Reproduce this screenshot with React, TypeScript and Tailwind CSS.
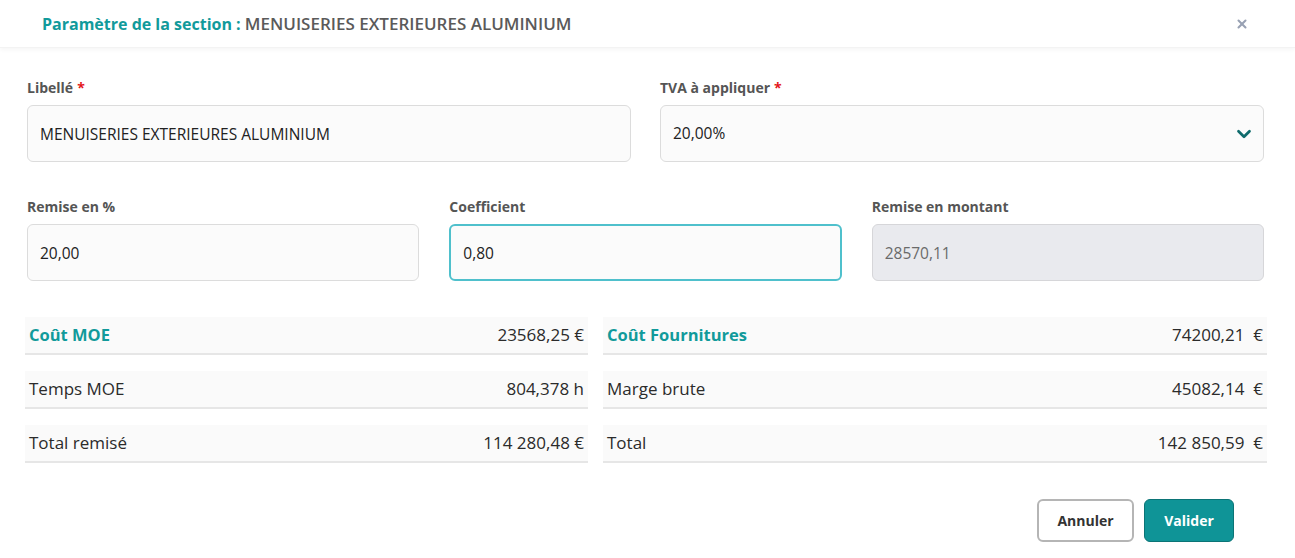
import React, { useState } from 'react';
import { X, ChevronDown } from 'lucide-react';

const font = { fontFamily: '"Open Sans", "Noto Sans", sans-serif' };

const Field: React.FC<{ label: string; required?: boolean; children: React.ReactNode }> = ({ label, required, children }) => (
  <div className="flex flex-col">
    <label className="text-[14px] font-bold text-[#555] mb-[8px] leading-[18px]">
      {label}
      {required && <span className="text-[#e3161b] ml-[4px]">*</span>}
    </label>
    {children}
  </div>
);

const StatRow: React.FC<{ label: string; value: string; accent?: boolean }> = ({ label, value, accent }) => (
  <div className="flex justify-between items-center h-[38px] bg-[#fafafa] border-b-2 border-[#e6e6e6] px-[4px]">
    <span className={accent ? 'text-[16.5px] font-bold text-[#119a9b]' : 'text-[17px] text-[#2b2b2b]'}>{label}</span>
    <span className="text-[17px] text-[#2b2b2b]">{value}</span>
  </div>
);

const base =
  'h-[57px] w-full rounded-[6px] px-[12px] text-[15.5px] outline-none';
const plain = base + ' border border-[#dcdcdc] bg-[#fbfbfb] text-[#222]';

export default function App() {
  const [libelle, setLibelle] = useState('MENUISERIES EXTERIEURES ALUMINIUM');
  const [remise, setRemise] = useState('20,00');
  const [coef, setCoef] = useState('0,80');

  return (
    <div className="w-[1295px] h-[558px] bg-white overflow-hidden" style={font}>
      <div className="h-[48px] flex items-center justify-between pl-[42px] pr-[46px] shadow-[0_2px_4px_rgba(0,0,0,0.04)] border-b border-[#f3f3f3]">
        <h2 className="text-[16px]">
          <span className="font-bold text-[#119a9b]">Paramètre de la section : </span>
          <span className="font-semibold text-[17px] text-[#5a5a5a]">MENUISERIES EXTERIEURES ALUMINIUM</span>
        </h2>
        <X size={14} strokeWidth={3.5} className="text-[#98a1b3]" />
      </div>

      <div className="pl-[27px] pr-[31px] pt-[31px]">
        <div className="grid grid-cols-2 gap-[29px]">
          <Field label="Libellé" required>
            <input className={plain} value={libelle} onChange={(e) => setLibelle(e.target.value)} />
          </Field>
          <Field label="TVA à appliquer" required>
            <div className={plain + ' flex items-center justify-between'}>
              <span>20,00%</span>
              <ChevronDown size={22} strokeWidth={3} className="text-[#0f6b6c] mr-[-4px]" />
            </div>
          </Field>
        </div>

        <div className="grid grid-cols-3 gap-[30px] mt-[36px]">
          <Field label="Remise en %">
            <input className={plain} value={remise} onChange={(e) => setRemise(e.target.value)} />
          </Field>
          <Field label="Coefficient">
            <input
              className={base + ' border-2 border-[#4fc0cc] bg-[#fbfbfb] text-[#222] px-[11px]'}
              value={coef}
              onChange={(e) => setCoef(e.target.value)}
            />
          </Field>
          <Field label="Remise en montant">
            <input className={base + ' border border-[#d6d6d9] bg-[#e9eaee] text-[#6a6a6a]'} value="28570,11" readOnly />
          </Field>
        </div>
      </div>

      <div className="flex gap-[15px] pl-[25px] pr-[28px] mt-[36px]">
        <div className="w-[563px] flex flex-col gap-[16px]">
          <StatRow label="Coût MOE" value="23568,25 €" accent />
          <StatRow label="Temps MOE" value="804,378 h" />
          <StatRow label="Total remisé" value="114 280,48 €" />
        </div>
        <div className="flex-1 flex flex-col gap-[16px]">
          <StatRow label="Coût Fournitures" value={'74200,21\u00a0 €'} accent />
          <StatRow label="Marge brute" value={'45082,14\u00a0 €'} />
          <StatRow label="Total" value={'142 850,59\u00a0 €'} />
        </div>
      </div>

      <div className="flex justify-end gap-[10px] pr-[61px] mt-[36px]">
        <button className="h-[43px] w-[97px] rounded-[6px] border-2 border-[#b5b5b5] bg-white text-[14px] font-bold text-[#333]">
          Annuler
        </button>
        <button className="h-[43px] w-[90px] rounded-[6px] border border-[#0b7476] bg-[#0f9497] text-[14px] font-bold text-white">
          Valider
        </button>
      </div>
    </div>
  );
}
